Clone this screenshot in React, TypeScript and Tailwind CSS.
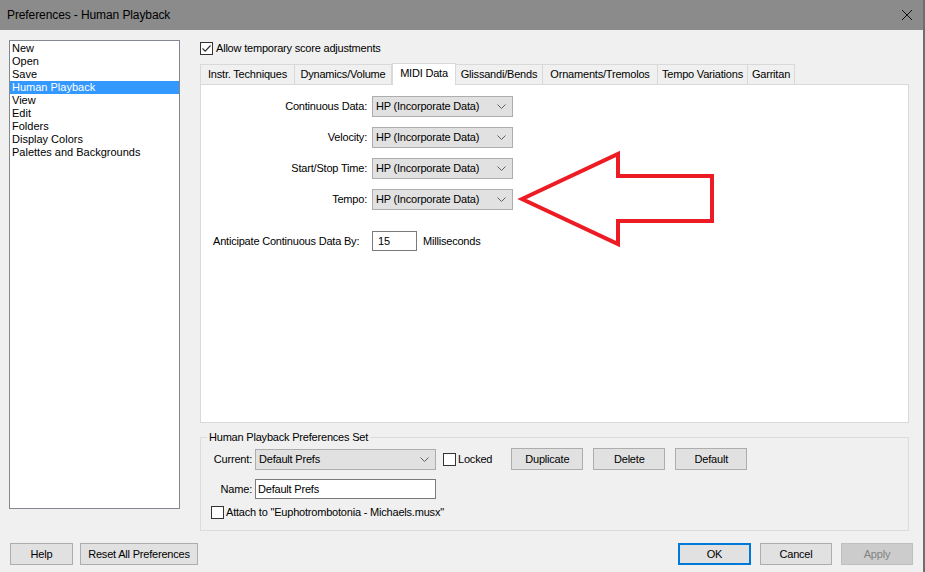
import React from "react";

const tabs = [
  { label: "Instr. Techniques", w: "w-[95px]" },
  { label: "Dynamics/Volume", w: "w-[97px]" },
  { label: "MIDI Data", w: "w-[64px]", active: true },
  { label: "Glissandi/Bends", w: "w-[87px]" },
  { label: "Ornaments/Tremolos", w: "w-[115px]" },
  { label: "Tempo Variations", w: "w-[90px]" },
  { label: "Garritan", w: "w-[47px]" },
];

const categories = [
  "New",
  "Open",
  "Save",
  "Human Playback",
  "View",
  "Edit",
  "Folders",
  "Display Colors",
  "Palettes and Backgrounds",
];

const midiRows = ["Continuous Data:", "Velocity:", "Start/Stop Time:", "Tempo:"];

function Chevron() {
  return (
    <svg width="9" height="5" viewBox="0 0 9 5" className="shrink-0">
      <path d="M0.5 0.5 L4.5 4.5 L8.5 0.5" fill="none" stroke="#606060" strokeWidth="1" />
    </svg>
  );
}

function Checkbox({ checked }: { checked?: boolean }) {
  return (
    <span className="w-[13px] h-[13px] border border-[#333333] bg-white flex items-center justify-center shrink-0">
      {checked && (
        <svg width="11" height="11" viewBox="0 0 11 11">
          <path d="M1.5 5.5 L4.2 8.2 L9.5 2.5" fill="none" stroke="#333333" strokeWidth="1.2" />
        </svg>
      )}
    </span>
  );
}

function Select({ value, w }: { value: string; w: string }) {
  return (
    <div
      className={`${w} h-[21px] bg-[#e1e1e1] border border-[#adadad] flex items-center justify-between pl-[3px] pr-[6px]`}
    >
      <span>{value}</span>
      <Chevron />
    </div>
  );
}

function Button({
  label,
  w,
  primary,
  disabled,
}: {
  label: string;
  w: string;
  primary?: boolean;
  disabled?: boolean;
}) {
  let cls = "bg-[#e1e1e1] border border-[#adadad]";
  if (primary) cls = "bg-[#e1e1e1] border-2 border-[#0078d7]";
  if (disabled) cls = "bg-[#cccccc] border border-[#bfbfbf] text-[#838383]";
  return (
    <div className={`${w} h-[22px] ${cls} flex items-center justify-center`}>{label}</div>
  );
}

export default function App() {
  return (
    <div className="w-[925px] h-[572px] bg-[#f0f0f0] border-r-2 border-[#6e6e6e] flex flex-col overflow-hidden text-black text-[11px] tracking-[-0.2px] font-['Liberation_Sans',Arial,sans-serif]">
      {/* title bar */}
      <div className="h-[30px] bg-[#8b8b8b] flex items-center justify-between pl-[7px] pr-[10px] text-[12px] tracking-[-0.1px] shrink-0">
        <span>Preferences - Human Playback</span>
        <svg width="12" height="12" viewBox="0 0 12 12">
          <path d="M1 1 L11 11 M11 1 L1 11" stroke="#111111" strokeWidth="1" />
        </svg>
      </div>

      <div className="flex pt-[10px] pl-[9px] gap-[20px]">
        {/* category list */}
        <div className="w-[171px] h-[469px] bg-white border border-[#828790] pt-px tracking-normal">
          {categories.map((c) => (
            <div
              key={c}
              className={`h-[13px] leading-[13px] pl-[2px] ${
                c === "Human Playback" ? "bg-[#3399ff] text-white" : ""
              }`}
            >
              {c}
            </div>
          ))}
        </div>

        <div className="w-[709px] flex flex-col">
          <div className="flex items-center gap-[3px] mt-[1px] h-[14px]">
            <Checkbox checked />
            <span>Allow temporary score adjustments</span>
          </div>

          {/* tabs */}
          <div className="flex items-end h-[22px] mt-[8px] -mb-px relative z-10">
            {tabs.map((t, i) =>
              t.active ? (
                <div
                  key={t.label}
                  className={`${t.w} h-[22px] bg-white border border-b-0 border-[#d9d9d9] flex items-center justify-center pb-[2px]`}
                >
                  {t.label}
                </div>
              ) : (
                <div
                  key={t.label}
                  className={`${t.w} h-[20px] mb-px bg-[#f0f0f0] border-t border-r border-[#d9d9d9] ${
                    i === 0 ? "border-l" : ""
                  } flex items-center justify-center`}
                >
                  {t.label}
                </div>
              )
            )}
          </div>

          {/* tab panel */}
          <div className="h-[339px] bg-white border border-[#d9d9d9] relative">
            <div className="flex flex-col gap-[10px] pt-[11px]">
              {midiRows.map((r) => (
                <div key={r} className="flex items-center">
                  <span className="w-[166px] text-right">{r}</span>
                  <div className="ml-[5px]">
                    <Select value="HP (Incorporate Data)" w="w-[141px]" />
                  </div>
                </div>
              ))}
            </div>
            <div className="flex items-center mt-[21px] pl-[12px]">
              <span className="w-[159px]">Anticipate Continuous Data By:</span>
              <div className="w-[45px] h-[20px] bg-white border border-[#7a7a7a] flex items-center pl-[5px]">
                15
              </div>
              <span className="ml-[6px]">Milliseconds</span>
            </div>

            <svg
              className="absolute left-[300px] top-[58px]"
              width="230"
              height="110"
              viewBox="300 58 230 110"
            >
              <polygon
                points="321,114 417,69 417,91 511,91 511,136 417,136 417,159"
                fill="none"
                stroke="#ed1c24"
                strokeWidth="4"
                strokeLinejoin="miter"
              />
            </svg>
          </div>

          {/* preferences set group */}
          <fieldset className="mt-[8px] h-[100px] border border-[#dcdcdc] px-0 pb-0">
            <legend className="ml-[6px] px-[2px] leading-[13px]">Human Playback Preferences Set</legend>
            <div className="flex items-center mt-[4px]">
              <span className="w-[54px] text-right pr-[3px]">Current:</span>
              <Select value="Default Prefs" w="w-[181px]" />
              <div className="ml-[7px] flex items-center gap-[2px]">
                <Checkbox />
                <span>Locked</span>
              </div>
              <div className="ml-[19px] flex gap-[10px]">
                <Button label="Duplicate" w="w-[72px]" />
                <Button label="Delete" w="w-[72px]" />
                <Button label="Default" w="w-[72px]" />
              </div>
            </div>
            <div className="flex items-center mt-[9px]">
              <span className="w-[54px] text-right pr-[3px]">Name:</span>
              <div className="w-[181px] h-[20px] bg-white border border-[#7a7a7a] flex items-center pl-[2px]">
                Default Prefs
              </div>
            </div>
            <div className="flex items-center gap-[2px] mt-[5px] ml-[10px]">
              <Checkbox />
              <span>Attach to "Euphotrombotonia - Michaels.musx"</span>
            </div>
          </fieldset>
        </div>
      </div>

      {/* bottom buttons */}
      <div className="flex items-center justify-between mt-[12px] pl-[10px] pr-[10px]">
        <div className="flex gap-[7px]">
          <Button label="Help" w="w-[63px]" />
          <Button label="Reset All Preferences" w="w-[118px]" />
        </div>
        <div className="flex gap-[9px]">
          <Button label="OK" w="w-[73px]" primary />
          <Button label="Cancel" w="w-[72px]" />
          <Button label="Apply" w="w-[72px]" disabled />
        </div>
      </div>
    </div>
  );
}
